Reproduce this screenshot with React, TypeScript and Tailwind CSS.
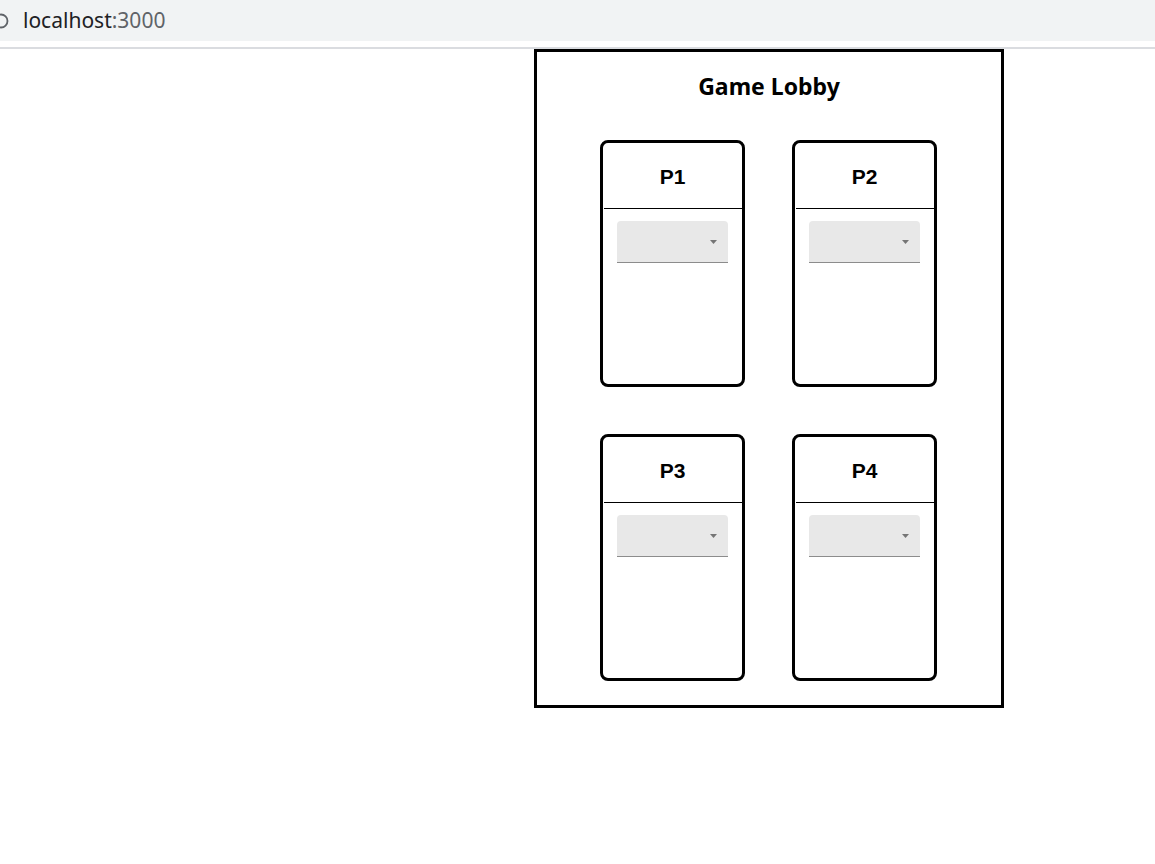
const PLAYERS = ['P1', 'P2', 'P3', 'P4']

function AddressBar() {
  return (
    <div>
      <div className="h-[41px] bg-[#f1f3f4] flex items-center">
        <svg width="16" height="16" viewBox="0 0 16 16" className="ml-[-7px] shrink-0">
          <circle cx="8" cy="8" r="6.5" fill="none" stroke="#5f6368" strokeWidth="1.8" />
        </svg>
        <span className="ml-[14px] text-[21px] text-[#202124] font-['Noto_Sans',sans-serif] leading-none">
          localhost<span className="text-[#5f6368]">:3000</span>
        </span>
      </div>
      <div className="h-[6px]" />
      <div className="h-[2px] bg-[#dadce0]" />
    </div>
  )
}

function PlayerCard({ name }: { name: string }) {
  return (
    <div className="h-[247px] border-[3px] border-black rounded-[8px] flex flex-col">
      <div className="h-[65px] pt-[2px] flex items-center justify-center text-[21px] font-bold font-['Liberation_Sans',Arial,sans-serif]">
        {name}
      </div>
      <div className="h-px bg-black ml-px" />
      {/* filled select, nothing chosen */}
      <div className="mt-[12px] mx-[14px] h-[42px] bg-[#e8e8e8] rounded-t-[4px] border-b border-[#8c8c8c] flex items-center justify-end pr-[11px]">
        <svg width="7" height="4" viewBox="0 0 7 4">
          <path d="M0 0h7L3.5 4z" fill="#757575" />
        </svg>
      </div>
    </div>
  )
}

export default function App() {
  return (
    <div className="min-h-screen bg-white text-black">
      <AddressBar />
      <div className="ml-[534px] w-[470px] h-[659px] border-[3px] border-black">
        <h1 className="pt-[19px] h-[50px] leading-[31px] text-center text-[23px] font-bold font-['Noto_Sans',sans-serif]">
          Game Lobby
        </h1>
        <div className="mt-[38px] pl-[63px] grid grid-cols-[145px_145px] gap-[47px]">
          {PLAYERS.map(p => (
            <PlayerCard key={p} name={p} />
          ))}
        </div>
      </div>
    </div>
  )
}
